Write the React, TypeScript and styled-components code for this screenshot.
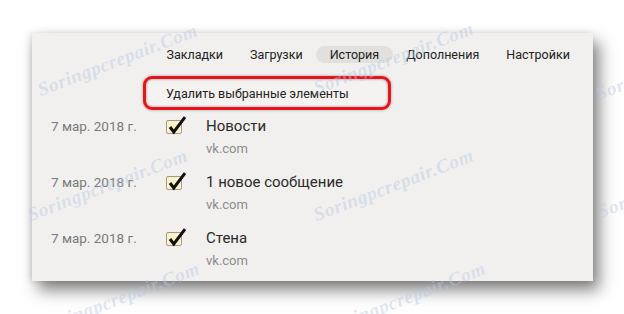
import styled, { createGlobalStyle } from 'styled-components';

const GlobalStyle = createGlobalStyle`
  html, body {
    margin: 0;
    padding: 0;
    background: #ffffff;
  }
  body {
    font-family: Roboto, 'Noto Sans', sans-serif;
  }
`;

const tabs = ['Закладки', 'Загрузки', 'История', 'Дополнения', 'Настройки'];

const items = [
  { date: '7 мар. 2018 г.', title: 'Новости', url: 'vk.com' },
  { date: '7 мар. 2018 г.', title: '1 новое сообщение', url: 'vk.com' },
  { date: '7 мар. 2018 г.', title: 'Стена', url: 'vk.com' },
];

// start point (left end of the baseline) of each watermark
const marks = [
  { x: 42, y: 100 },
  { x: 318, y: 98 },
  { x: 600, y: 104 },
  { x: 32, y: 225 },
  { x: 318, y: 225 },
  { x: 602, y: 222 },
  { x: 44, y: 338 },
  { x: 330, y: 338 },
];

export default function App() {
  return (
    <Page>
      <GlobalStyle />
      <Panel>
        <Nav>
          {tabs.map((t) => (
            <Tab key={t} active={t === 'История'}>
              {t}
            </Tab>
          ))}
        </Nav>
        <DeleteButton>Удалить выбранные элементы</DeleteButton>
        <List>
          {items.map((it, i) => (
            <Row key={i}>
              <DateCell>{it.date}</DateCell>
              <CheckCell>
                <Box />
                <CheckMark viewBox="0 0 20 20">
                  <path d="M3 11 L6.8 16 L18 1.2" />
                </CheckMark>
              </CheckCell>
              <Title>{it.title}</Title>
              <Url>{it.url}</Url>
            </Row>
          ))}
        </List>
      </Panel>
      {marks.map((m, i) => (
        <Watermark key={i} style={{ left: m.x, top: m.y - 20 }}>
          Soringpcrepair.Com
        </Watermark>
      ))}
    </Page>
  );
}

const Page = styled.div`
  position: relative;
  width: 624px;
  height: 314px;
  overflow: hidden;
  padding: 33px 0 0 32px;
  box-sizing: border-box;
`;

const Panel = styled.div`
  width: 561px;
  height: 248px;
  background: #f1f0ee;
  box-shadow: 6px 9px 15px rgba(0, 0, 0, 0.5), -2px 0 6px rgba(0, 0, 0, 0.12);
  padding-top: 13px;
  box-sizing: border-box;
`;

const Nav = styled.div`
  display: flex;
  align-items: center;
  height: 17px;
  padding-left: 121px;
`;

const Tab = styled.div<{ active?: boolean }>`
  height: 17px;
  line-height: 17px;
  padding: 0 13.5px;
  border-radius: 9px;
  font-size: 12.5px;
  color: #222;
  background: ${(p) => (p.active ? '#e1e0dd' : 'transparent')};
`;

const DeleteButton = styled.div`
  margin: 13px 0 0 111px;
  width: 248px;
  height: 34px;
  box-sizing: border-box;
  border: 3px solid #e8141b;
  border-radius: 9px;
  box-shadow: 0 0 3px rgba(0, 0, 0, 0.35), inset 0 0 3px rgba(0, 0, 0, 0.4);
  background: #f4f3f1;
  padding-left: 20px;
  display: flex;
  align-items: center;
  font-size: 12.5px;
  color: #222;
`;

const List = styled.div`
  margin-top: 6px;
  display: flex;
  flex-direction: column;
  gap: 15px;
`;

const Row = styled.div`
  display: grid;
  grid-template-columns: 115px 40px 1fr;
  grid-template-rows: 20px 21px;
  padding-left: 19px;
`;

const DateCell = styled.div`
  grid-column: 1;
  grid-row: 1;
  font-size: 13.5px;
  line-height: 21px;
  color: #7a7a7a;
`;

const CheckCell = styled.div`
  grid-column: 2;
  grid-row: 1;
  position: relative;
  height: 20px;
`;

const Box = styled.div`
  position: absolute;
  left: 0;
  top: 4px;
  width: 16px;
  height: 14px;
  box-sizing: border-box;
  border: 1px solid #a29c86;
  border-radius: 2px;
  background: #fbf2c9;
`;

const CheckMark = styled.svg`
  position: absolute;
  left: 1px;
  top: 0;
  width: 20px;
  height: 20px;
  fill: none;
  stroke: #111;
  stroke-width: 3;
  stroke-linejoin: miter;
`;

const Title = styled.div`
  grid-column: 3;
  grid-row: 1;
  font-size: 15px;
  line-height: 20px;
  color: #2b2b2b;
`;

const Url = styled.div`
  grid-column: 3;
  grid-row: 2;
  font-size: 13px;
  line-height: 21px;
  padding-top: 2px;
  color: #8c8c8c;
`;

const Watermark = styled.div`
  position: absolute;
  pointer-events: none;
  height: 20px;
  line-height: 20px;
  font-family: 'Liberation Serif', serif;
  font-style: italic;
  font-weight: bold;
  font-size: 19px;
  color: rgba(185, 200, 228, 0.45);
  transform: rotate(-21deg);
  transform-origin: left bottom;
  white-space: nowrap;
  letter-spacing: 0.6px;
`;
